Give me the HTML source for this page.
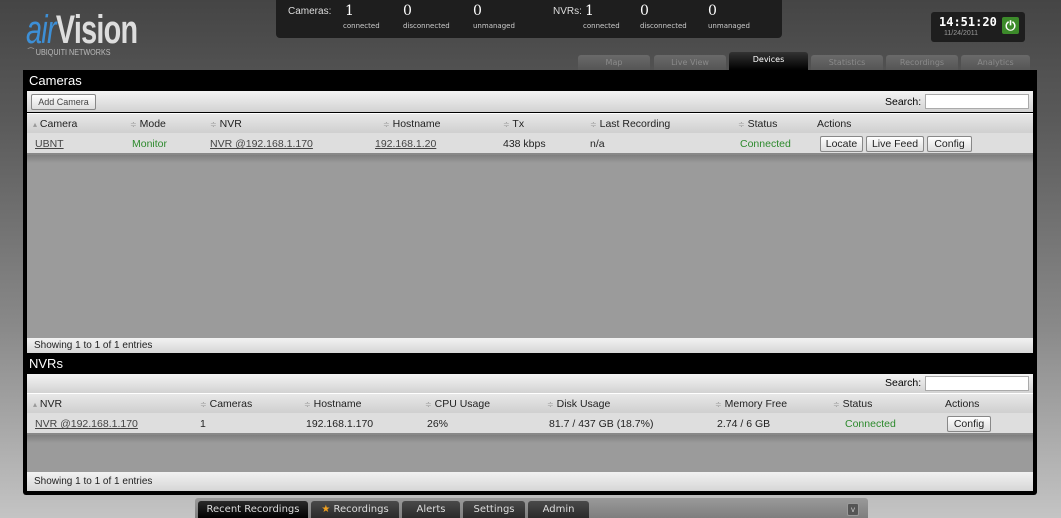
<!DOCTYPE html><html><head><meta charset="utf-8"><style>
*{margin:0;padding:0;box-sizing:border-box}
body{width:1061px;height:518px;overflow:hidden;position:relative;font-family:"Liberation Sans",sans-serif;font-size:10.5px;background:linear-gradient(#454545 0px,#5a5a5a 120px,#8a8a8a 330px,#c4c4c4 518px)}
.a{position:absolute}
.stat{color:#ddd;font-size:10px}
.big{font-family:"DejaVu Serif",serif;font-size:14px;color:#fff}
.sm{font-size:7px;color:#ccc;font-family:"DejaVu Sans",sans-serif}
.tab{position:absolute;top:55px;height:15px;background:linear-gradient(#6a6a6a,#555);border-radius:3px 3px 0 0;color:#8a8a8a;font-size:8px;text-align:center;line-height:15px;font-family:"DejaVu Sans",sans-serif}
.hdr{position:absolute;left:27px;width:1006px;color:#fff;font-size:13px;padding-left:2px}
.bar{position:absolute;left:27px;width:1006px;background:linear-gradient(#f4f4f4,#d2d2d2)}
.th{position:absolute;left:27px;width:1006px;background:linear-gradient(#e8e8e8,#cfcfcf);color:#222;border-top:1px solid #fff}
.tr{position:absolute;left:27px;width:1006px;background:#dedede;color:#222;border-bottom:2px solid #888}
.c{position:absolute;top:4px;white-space:nowrap}
.s{color:#999;font-size:8px}
u{color:#444}
.g{color:#2d8a2d}
.btn{position:absolute;top:3px;height:16px;border:1px solid #888;border-radius:2px;background:linear-gradient(#fff,#ddd);line-height:14px;text-align:center;font-size:10.5px;color:#222}
.search{position:absolute;top:3px;width:104px;height:15px;background:#fff;border:1px solid #aaa}
.foot{position:absolute;left:27px;width:1006px;background:linear-gradient(#f2f2f2,#d6d6d6);font-size:10px;color:#222;padding-left:7px}
.bt{position:absolute;top:501px;height:17px;background:linear-gradient(#4a4a4a,#2a2a2a);border-radius:3px 3px 0 0;color:#ddd;font-size:10px;text-align:center;line-height:17px;font-family:"DejaVu Sans",sans-serif}
</style></head><body>
<!-- logo -->
<div class="a" style="left:26px;top:10px;font-size:40px;line-height:40px;color:#ddd;font-family:'Liberation Sans',sans-serif;font-weight:bold;letter-spacing:-1px;transform:scaleX(.72);transform-origin:left"><span style="color:#3d8fd6;font-style:italic;font-weight:normal">air</span>Vision</div>
<div class="a" style="left:28px;top:48px;font-size:8px;color:#bbb;transform:scaleX(.9);transform-origin:left">⁀ UBIQUITI NETWORKS</div>
<!-- stats -->
<div class="a" style="left:276px;top:0;width:506px;height:38px;background:#1e1e1e;border-radius:0 0 4px 4px"></div>
<div class="a stat" style="left:288px;top:6px">Cameras:</div>
<div class="a big" style="left:345px;top:3px">1</div><div class="a sm" style="left:343px;top:22px">connected</div>
<div class="a big" style="left:403px;top:3px">0</div><div class="a sm" style="left:403px;top:22px">disconnected</div>
<div class="a big" style="left:473px;top:3px">0</div><div class="a sm" style="left:473px;top:22px">unmanaged</div>
<div class="a stat" style="left:553px;top:6px">NVRs:</div>
<div class="a big" style="left:585px;top:3px">1</div><div class="a sm" style="left:583px;top:22px">connected</div>
<div class="a big" style="left:640px;top:3px">0</div><div class="a sm" style="left:640px;top:22px">disconnected</div>
<div class="a big" style="left:708px;top:3px">0</div><div class="a sm" style="left:708px;top:22px">unmanaged</div>
<!-- clock -->
<div class="a" style="left:931px;top:12px;width:94px;height:30px;background:#1e1e1e;border-radius:3px"></div>
<div class="a" style="left:939px;top:15px;color:#fff;font-weight:bold;font-size:12px;font-family:'DejaVu Sans Mono',monospace">14:51:20</div>
<div class="a" style="left:944px;top:30px;color:#999;font-size:7px">11/24/2011</div>
<div class="a" style="left:1002px;top:17px;width:17px;height:17px;background:#3c8a2a;border-radius:2px;color:#fff;text-align:center;font-size:13px;line-height:17px;font-weight:bold">⏻</div>
<!-- tabs -->
<div class="tab" style="left:578px;width:72px">Map</div>
<div class="tab" style="left:654px;width:72px">Live View</div>
<div class="tab" style="left:729px;top:52px;height:18px;width:79px;background:linear-gradient(#333,#000);color:#fff;line-height:16px">Devices</div>
<div class="tab" style="left:811px;width:72px">Statistics</div>
<div class="tab" style="left:886px;width:72px">Recordings</div>
<div class="tab" style="left:961px;width:69px">Analytics</div>
<!-- panel -->
<div class="a" style="left:23px;top:70px;width:1014px;height:425px;background:#000;border-radius:0 0 3px 3px"></div>
<div class="hdr" style="top:73px">Cameras</div>
<div class="bar" style="top:91px;height:21px">
 <div class="btn" style="left:4px;width:65px;font-size:9px;color:#444">Add Camera</div>
 <div class="c" style="left:858px;top:5px">Search:</div><div class="search" style="left:898px"></div></div>
<div class="th" style="top:113px;height:20px">
 <div class="c" style="left:6px"><span class="s">▴</span> Camera</div><div class="c" style="left:103px"><span class="s">≑</span> Mode</div>
 <div class="c" style="left:183px"><span class="s">≑</span> NVR</div><div class="c" style="left:356px"><span class="s">≑</span> Hostname</div>
 <div class="c" style="left:476px"><span class="s">≑</span> Tx</div><div class="c" style="left:563px"><span class="s">≑</span> Last Recording</div>
 <div class="c" style="left:711px"><span class="s">≑</span> Status</div><div class="c" style="left:790px">Actions</div></div>
<div class="tr" style="top:133px;height:22px">
 <div class="c" style="left:8px;top:5px"><u>UBNT</u></div><div class="c g" style="left:105px;top:5px">Monitor</div>
 <div class="c" style="left:183px;top:5px"><u>NVR @192.168.1.170</u></div><div class="c" style="left:348px;top:5px"><u>192.168.1.20</u></div>
 <div class="c" style="left:476px;top:5px">438 kbps</div><div class="c" style="left:563px;top:5px">n/a</div>
 <div class="c g" style="left:713px;top:5px">Connected</div>
 <div class="btn" style="left:793px;width:43px">Locate</div><div class="btn" style="left:839px;width:58px">Live Feed</div><div class="btn" style="left:900px;width:45px">Config</div></div>
<div class="a" style="left:27px;top:155px;width:1006px;height:183px;background:linear-gradient(#7f7f7f,#9b9b9b 8px,#9b9b9b)"></div>
<div class="foot" style="top:338px;height:15px;line-height:15px">Showing 1 to 1 of 1 entries</div>
<div class="hdr" style="top:356px">NVRs</div>
<div class="bar" style="top:374px;height:19px"><div class="c" style="left:858px;top:3px">Search:</div><div class="search" style="left:898px;top:2px"></div></div>
<div class="th" style="top:393px;height:20px">
 <div class="c" style="left:6px"><span class="s">▴</span> NVR</div><div class="c" style="left:173px"><span class="s">≑</span> Cameras</div>
 <div class="c" style="left:277px"><span class="s">≑</span> Hostname</div><div class="c" style="left:398px"><span class="s">≑</span> CPU Usage</div>
 <div class="c" style="left:520px"><span class="s">≑</span> Disk Usage</div><div class="c" style="left:688px"><span class="s">≑</span> Memory Free</div>
 <div class="c" style="left:806px"><span class="s">≑</span> Status</div><div class="c" style="left:918px">Actions</div></div>
<div class="tr" style="top:413px;height:22px">
 <div class="c" style="left:8px;top:5px"><u>NVR @192.168.1.170</u></div><div class="c" style="left:173px;top:5px">1</div>
 <div class="c" style="left:279px;top:5px">192.168.1.170</div><div class="c" style="left:400px;top:5px">26%</div>
 <div class="c" style="left:522px;top:5px">81.7 / 437 GB (18.7%)</div><div class="c" style="left:690px;top:5px">2.74 / 6 GB</div>
 <div class="c g" style="left:818px;top:5px">Connected</div><div class="btn" style="left:920px;width:44px">Config</div></div>
<div class="a" style="left:27px;top:435px;width:1006px;height:37px;background:linear-gradient(#7f7f7f,#9b9b9b 8px,#9b9b9b)"></div>
<div class="foot" style="top:472px;height:19px;line-height:19px">Showing 1 to 1 of 1 entries</div>
<!-- bottom bar -->
<div class="a" style="left:195px;top:498px;width:673px;height:20px;background:linear-gradient(#9a9a9a,#7e7e7e);border-radius:3px 3px 0 0"></div>
<div class="bt" style="left:198px;width:110px;background:linear-gradient(#2a2a2a,#000)">Recent Recordings</div>
<div class="bt" style="left:311px;width:88px"><span style="color:#f0a020">★</span> Recordings</div>
<div class="bt" style="left:402px;width:58px">Alerts</div>
<div class="bt" style="left:463px;width:62px">Settings</div>
<div class="bt" style="left:528px;width:61px">Admin</div>
<div class="a" style="left:847px;top:503px;width:12px;height:13px;background:#555;border:1px solid #999;border-radius:2px;color:#ccc;font-size:8px;text-align:center;line-height:11px">v</div>
</body></html>
